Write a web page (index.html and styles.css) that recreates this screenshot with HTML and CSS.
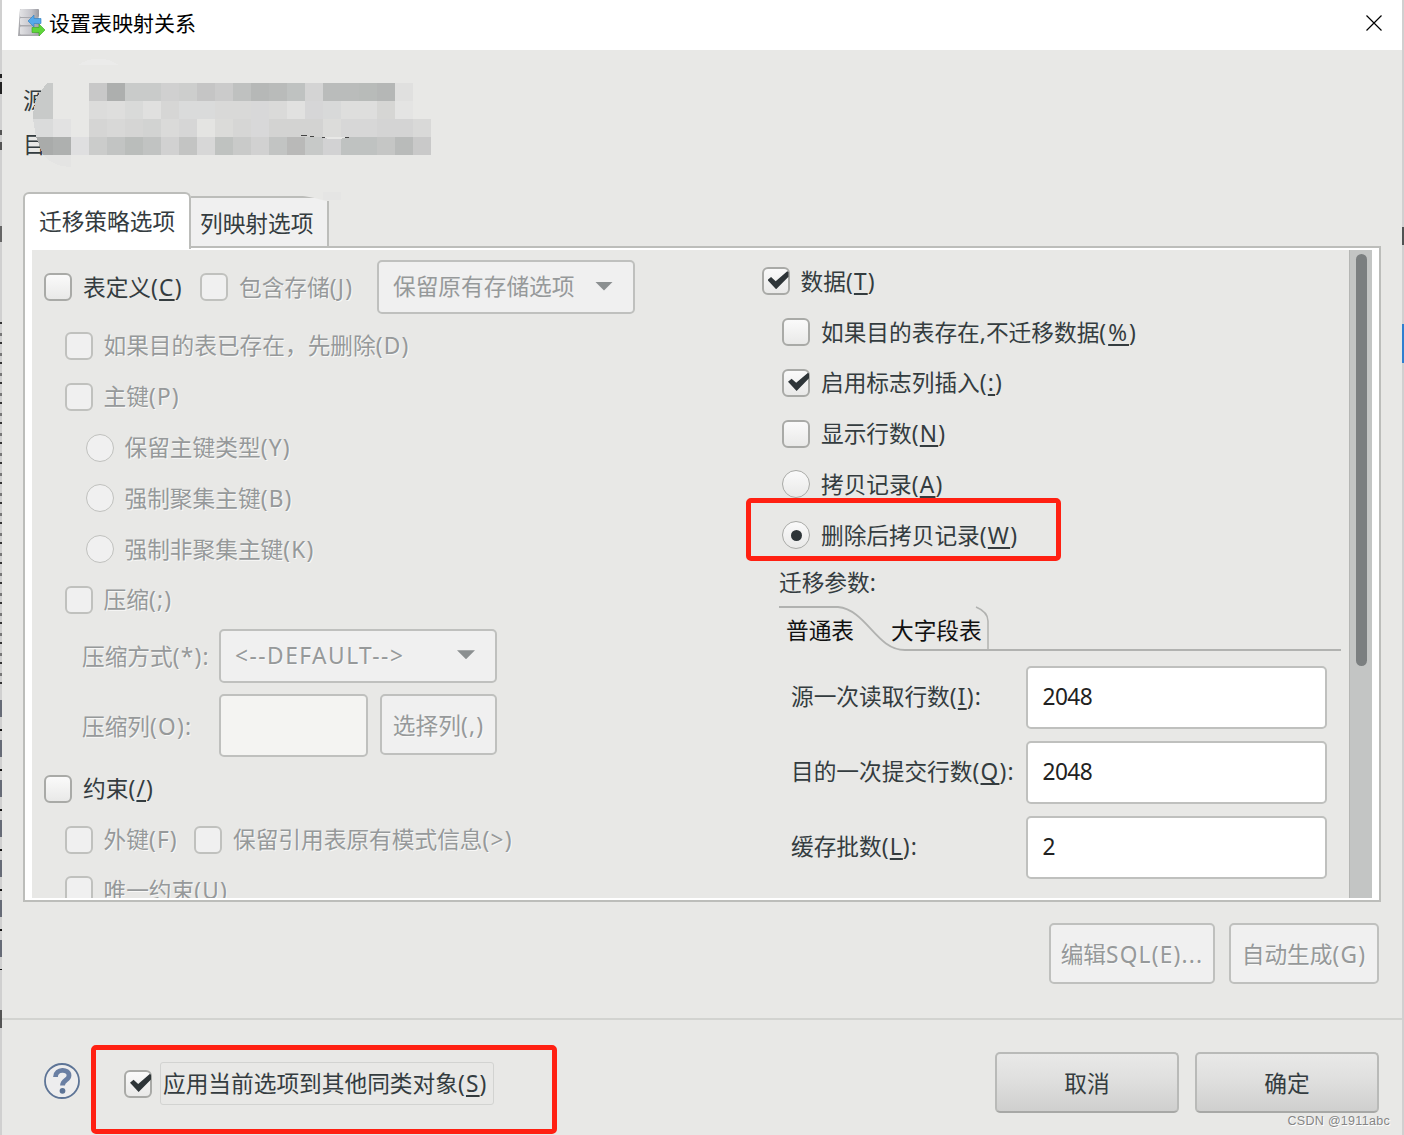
FILE: index.html
```html
<!DOCTYPE html>
<html lang="zh-CN">
<head>
    <meta charset="UTF-8">
    <meta name="viewport" content="width=device-width, initial-scale=1.0">
    <title>设置表映射关系</title>
    <link rel="stylesheet" href="styles.css">
</head>
<body>

    <div class="dialog">
        <div class="titlebar">
            <svg class="logo" width="28" height="30" viewBox="0 0 28 30">
                <defs>
                    <linearGradient id="metal" x1="0" x2="1"><stop offset="0" stop-color="#e2e2e4"/><stop offset="0.6" stop-color="#c4c4ca"/><stop offset="1" stop-color="#98989e"/></linearGradient>
                </defs>
                <path d="M3 1h18l2 27H1z" fill="#aaaaae"/>
                <rect x="3" y="1" width="19" height="8" rx="1" fill="url(#metal)"/>
                <rect x="3" y="10" width="19" height="7" rx="1" fill="url(#metal)"/>
                <rect x="3" y="18.500" width="19" height="8" rx="1" fill="url(#metal)"/>
                <path d="M11 13l6-6v3.500h7v5h-7v3.500z" fill="#55a9ea" stroke="#2d7cc0" stroke-width=".6"/>
                <path d="M28 22l-6-6v3.500h-7v5h7v3.500z" fill="#5fd63a" stroke="#37a41d" stroke-width=".6"/>
            </svg>
            <h1>设置表映射关系</h1>
            <svg class="close" width="16" height="16" viewBox="0 0 16 16"><path d="M.5 .5l15 15M15.500 .5l-15 15" stroke="#000" stroke-width="1.200"/></svg>
        </div>

        <div class="info">
            <p>源</p>
            <p>目</p>
            <svg class="mosaic" width="420" height="150" viewBox="15 55 420 150" shape-rendering="crispEdges">
                <path d="M78 65Q98 52 119 65z" fill="#ebebea"/>
                <path d="M53 83h-5Q33 96 33 119H53z" fill="#c8cac9"/>
                <path d="M33 119h20v18H36z" fill="#dadbdb"/>
                <path d="M36 137h17v18H43z" fill="#a9abaa"/>
                <path d="M43 155h28v12Q54 167 43 155z" fill="#e4e4e3"/>
                <g>
                    <rect x="89" y="83" width="18" height="18" fill="#c8c8c8"/><rect x="107" y="83" width="18" height="18" fill="#adafae"/><rect x="125" y="83" width="36" height="18" fill="#c9cbca"/><rect x="161" y="83" width="18" height="18" fill="#d0d0d0"/><rect x="179" y="83" width="18" height="18" fill="#cdcecd"/><rect x="197" y="83" width="18" height="18" fill="#c5c5c5"/><rect x="215" y="83" width="18" height="18" fill="#cbcbcb"/><rect x="233" y="83" width="18" height="18" fill="#bfc1c0"/><rect x="251" y="83" width="18" height="18" fill="#b6b8b7"/><rect x="269" y="83" width="18" height="18" fill="#b9bbba"/><rect x="287" y="83" width="18" height="18" fill="#bfc2c1"/><rect x="305" y="83" width="18" height="18" fill="#d4d4d4"/><rect x="323" y="83" width="36" height="18" fill="#babcbb"/><rect x="359" y="83" width="18" height="18" fill="#b8bbb9"/><rect x="377" y="83" width="18" height="18" fill="#b5b7b6"/><rect x="395" y="83" width="18" height="18" fill="#e0e0df"/>
                </g>
                <g>
                    <rect x="89" y="101" width="18" height="18" fill="#dcdcdb"/><rect x="107" y="101" width="18" height="18" fill="#dededd"/><rect x="125" y="101" width="18" height="18" fill="#d9dad9"/><rect x="143" y="101" width="18" height="18" fill="#e0e0df"/><rect x="161" y="101" width="18" height="18" fill="#d6d6d5"/><rect x="179" y="101" width="36" height="18" fill="#dadbdb"/><rect x="215" y="101" width="36" height="18" fill="#d9d9d8"/><rect x="251" y="101" width="18" height="18" fill="#d8d8d9"/><rect x="269" y="101" width="18" height="18" fill="#dadad9"/><rect x="287" y="101" width="18" height="18" fill="#e1e1e0"/><rect x="305" y="101" width="18" height="18" fill="#d6d6d7"/><rect x="323" y="101" width="18" height="18" fill="#d8d9d9"/><rect x="341" y="101" width="36" height="18" fill="#dededd"/><rect x="377" y="101" width="18" height="18" fill="#d6d6d4"/><rect x="395" y="101" width="18" height="18" fill="#e4e4e3"/>
                </g>
                <g>
                    <rect x="53" y="119" width="18" height="18" fill="#e2e2e2"/><rect x="89" y="119" width="18" height="18" fill="#d5d5d4"/><rect x="107" y="119" width="18" height="18" fill="#d8d8d7"/><rect x="125" y="119" width="18" height="18" fill="#d5d5d4"/><rect x="143" y="119" width="18" height="18" fill="#d2d3d2"/><rect x="161" y="119" width="18" height="18" fill="#dadad9"/><rect x="179" y="119" width="18" height="18" fill="#d6d6d6"/><rect x="197" y="119" width="18" height="18" fill="#e4e4e2"/><rect x="215" y="119" width="18" height="18" fill="#dbdbd9"/><rect x="233" y="119" width="18" height="18" fill="#d6d6d5"/><rect x="251" y="119" width="18" height="18" fill="#d8d8d9"/><rect x="269" y="119" width="54" height="18" fill="#d3d3d2"/><rect x="323" y="119" width="18" height="18" fill="#dcdcda"/><rect x="341" y="119" width="36" height="18" fill="#d7d7d7"/><rect x="377" y="119" width="36" height="18" fill="#d4d4d4"/><rect x="413" y="119" width="18" height="18" fill="#d9d9d8"/>
                </g>
                <g>
                    <rect x="53" y="137" width="18" height="18" fill="#aeb0af"/><rect x="71" y="137" width="18" height="18" fill="#dfdfe0"/><rect x="89" y="137" width="18" height="18" fill="#cbcccb"/><rect x="107" y="137" width="18" height="18" fill="#c2c4c3"/><rect x="125" y="137" width="18" height="18" fill="#babdbb"/><rect x="143" y="137" width="18" height="18" fill="#c1c3c2"/><rect x="161" y="137" width="18" height="18" fill="#d1d1d1"/><rect x="179" y="137" width="18" height="18" fill="#c3c4c3"/><rect x="197" y="137" width="18" height="18" fill="#d7d7d7"/><rect x="215" y="137" width="18" height="18" fill="#bfc2c0"/><rect x="233" y="137" width="18" height="18" fill="#c9cac9"/><rect x="251" y="137" width="18" height="18" fill="#d1d1d1"/><rect x="269" y="137" width="18" height="18" fill="#c2c4c3"/><rect x="287" y="137" width="18" height="18" fill="#b9b9b8"/><rect x="305" y="137" width="18" height="18" fill="#c7c9c8"/><rect x="323" y="137" width="18" height="18" fill="#d2d2d3"/><rect x="341" y="137" width="36" height="18" fill="#bfc2c1"/><rect x="377" y="137" width="18" height="18" fill="#c5c6c5"/><rect x="395" y="137" width="18" height="18" fill="#b9bbba"/><rect x="413" y="137" width="18" height="18" fill="#c9c9c9"/>
                </g>
                <path d="M323 137h23q-4 2.500-11 2.500t-12-2.500z" fill="#e8e8e6"/>
                <path d="M301 135.500h6M310 136.500h4M322 137.500h3M345 137.500h4" stroke="#444" stroke-width="1.200"/>
            </svg>
        </div>

        <div class="tabs">
            <div class="tab active">迁移策略选项</div>
            <div class="tab">列映射选项</div>
            <svg class="smudge" width="100" height="10" viewBox="0 0 100 10"><path d="M0 2Q30 3 48 9H62V0H0z" fill="#e8e8e6"/><path d="M45 0h18v8H45z" fill="#e5e5e4"/></svg>
        </div>

        <div class="panel">
            <div class="content">
                <div class="left">
                    <div class="row first">
                        <i class="check"></i><label class="w-def">表定义<span>(<u>C</u>)</span></label>
                        <i class="check off"></i><label class="w-store off">包含存储<span>(J)</span></label>
                        <div class="combo w258"><b>保留原有存储选项</b><i class="arrow"></i></div>
                    </div>
                    <div class="row in1 off"><i class="check"></i><label>如果目的表已存在，先删除<span>(D)</span></label></div>
                    <div class="row in1 off"><i class="check"></i><label>主键<span>(P)</span></label></div>
                    <div class="row in2 off"><i class="radio"></i><label>保留主键类型<span>(Y)</span></label></div>
                    <div class="row in2 off"><i class="radio"></i><label>强制聚集主键<span>(B)</span></label></div>
                    <div class="row in2 off"><i class="radio"></i><label>强制非聚集主键<span>(K)</span></label></div>
                    <div class="row in1 off"><i class="check"></i><label>压缩<span>(;)</span></label></div>
                    <div class="row method off">
                        <label class="w-name">压缩方式<span>(*):</span></label>
                        <div class="combo w278"><b class="latin">&lt;--DEFAULT--&gt;</b><i class="arrow"></i></div>
                    </div>
                    <div class="row columns off">
                        <label class="w-name">压缩列<span>(O):</span></label>
                        <div class="field empty"></div>
                        <div class="btn pick">选择列<span>(,)</span></div>
                    </div>
                    <div class="row limits"><i class="check"></i><label>约束<span>(<u>/</u>)</span></label></div>
                    <div class="row in1 off">
                        <i class="check"></i><label class="w-fk">外键<span>(F)</span></label>
                        <i class="check"></i><label>保留引用表原有模式信息<span>(&gt;)</span></label>
                    </div>
                    <div class="row in1 off"><i class="check"></i><label>唯一约束<span>(U)</span></label></div>
                </div>

                <div class="right">
                    <div class="row"><i class="check on"></i><label>数据<span>(<u>T</u>)</span></label></div>
                    <div class="row in1"><i class="check"></i><label>如果目的表存在,不迁移数据<span class="wide">(<u>%</u>)</span></label></div>
                    <div class="row in1"><i class="check on"></i><label>启用标志列插入<span>(<u>:</u>)</span></label></div>
                    <div class="row in1"><i class="check"></i><label>显示行数<span>(<u>N</u>)</span></label></div>
                    <div class="row in1"><i class="radio"></i><label>拷贝记录<span>(<u>A</u>)</span></label></div>
                    <div class="row in1"><i class="radio on"></i><label>删除后拷贝记录<span>(<u>W</u>)</span></label><div class="mark mark-copy"></div></div>
                    <div class="params">迁移参数:</div>
                    <div class="subtabs">
                        <svg width="562" height="46" viewBox="0 0 562 46">
                            <path d="M0 1H59C88 4 97 44 126 44H562" fill="none" stroke="#b1b2b0" stroke-width="1.800"/>
                            <path d="M197 1Q209 6 209 15V44" fill="none" stroke="#b1b2b0" stroke-width="1.500"/>
                        </svg>
                        <span class="sub1">普通表</span><span class="sub2">大字段表</span>
                    </div>
                    <div class="form">
                        <label>源一次读取行数<span>(<u>I</u>):</span></label><div class="field">2048</div>
                        <label>目的一次提交行数<span>(<u>Q</u>):</span></label><div class="field">2048</div>
                        <label>缓存批数<span>(<u>L</u>):</span></label><div class="field">2</div>
                    </div>
                </div>
            </div>
            <div class="scroll"><div class="thumb"></div></div>
        </div>

        <div class="actions off">
            <div class="btn edit">编辑<span>SQL(E)...</span></div>
            <div class="btn auto">自动生成<span>(G)</span></div>
        </div>

        <div class="footer">
            <svg class="help" width="38" height="38" viewBox="0 0 38 38">
                <circle cx="19" cy="19" r="17" fill="#ededee" stroke="#5d7496" stroke-width="1.800"/>
                <path d="M12.500 15C12.500 6.500 26 6.500 26 13.500C26 18.500 19.500 17.500 19.500 23.500" fill="none" stroke="#6a7fa3" stroke-width="4.800"/>
                <circle cx="19.500" cy="28.800" r="2.900" fill="#5d7496"/>
            </svg>
            <i class="check on"></i>
            <label class="focus">应用当前选项到其他同类对象<span>(<u>S</u>)</span></label>
            <div class="mark mark-apply"></div>
            <div class="btn main">取消</div>
            <div class="btn main">确定</div>
            <div class="watermark">CSDN @1911abc</div>
        </div>
    </div>

</body>
</html>
```
FILE: styles.css
```css
* {
    margin: 0;
    padding: 0;
    box-sizing: border-box;
}

/* thin slices of the window behind show on both sides of the dialog */
body {
    width: 1404px;
    height: 1135px;
    overflow: hidden;
    background:
        linear-gradient(#2f7fd0, #2f7fd0) 1402px 324px / 2px 39px no-repeat,
        linear-gradient(#505353, #505353) 1402px 227px / 2px 18px no-repeat,
        linear-gradient(#222, #222) 0 74px / 2px 4px no-repeat,
        linear-gradient(#222, #222) 0 82px / 2px 12px no-repeat,
        linear-gradient(#555, #555) 0 130px / 2px 5px no-repeat,
        linear-gradient(#555, #555) 0 142px / 2px 8px no-repeat,
        linear-gradient(#666, #666) 0 226px / 2px 16px no-repeat,
        repeating-linear-gradient(#333 0 2px, #d0d0d0 2px 11px, #777 11px 14px, #d0d0d0 14px 20px) 0 322px / 2px 370px no-repeat,
        repeating-linear-gradient(#666b77 0 17px, #d0d0d0 17px 29px, #111 29px 31px, #d0d0d0 31px 40px) 0 700px / 2px 270px no-repeat,
        linear-gradient(#555, #555) 0 1010px / 2px 18px no-repeat,
        #d0d0d0;
    padding: 0 2px;
    font-family: "Noto Sans", "Noto Sans CJK SC", sans-serif;
    font-size: 22.7px;
    line-height: 30px;
    color: #343c3f;
    white-space: nowrap;
}

.dialog {
    height: 1135px;
    background: #e8e8e6;
    display: flex;
    flex-direction: column;
}

.titlebar {
    height: 50px;
    background: #fff;
    display: flex;
    align-items: center;
    padding: 0 20px 4px 15px;
}

.titlebar h1 {
    font: 21px/30px "Noto Sans CJK SC", sans-serif;
    color: #000;
    margin-left: 4px;
    padding-bottom: 3px;
    flex: 1;
}

/* source / target names, hidden by the mosaic */
.info {
    height: 142px;
    padding: 36px 0 0 21px;
    position: relative;
}

.info p {
    height: 44px;
}

.mosaic {
    position: absolute;
    left: 13px;
    top: 5px;
}

.tabs {
    height: 54px;
    padding-left: 21px;
    display: flex;
    align-items: flex-end;
    position: relative;
}

.tab {
    height: 50px;
    width: 138px;
    padding: 11px 0 0 9px;
    border: 2px solid #bcbdba;
    border-left: none;
    border-bottom: none;
    background: #f0f0f0;
}

.tab.active {
    width: 168px;
    height: 57px;
    margin-bottom: -3px;
    padding: 13px 0 0 14px;
    border-left: 2px solid #bcbdba;
    border-radius: 6px 6px 0 0;
    background: #fff;
    position: relative;
    z-index: 1;
}

.smudge {
    position: absolute;
    left: 276px;
    top: 0;
}

.panel {
    height: 656px;
    width: 1358px;
    margin-left: 21px;
    border: 2px solid #bcbdba;
    background: #fff;
    padding: 2px 7px 2px 7px;
    display: flex;
}

.content {
    flex: 1;
    height: 648px;
    overflow: hidden;
    background: #e8e8e6;
    display: flex;
}

.left {
    width: 729.5px;
    padding: 11px 0 0 12px;
    flex-shrink: 0;
}

.right {
    padding-top: 5.9px;
    flex: 1;
}

.row {
    height: 50.8px;
    display: flex;
    align-items: center;
    position: relative;
}

.row.first {
    height: 54px;
    margin: -1px 0 6.6px;
}

.in1 {
    padding-left: 20.5px;
}

.in2 {
    padding-left: 41.5px;
}

.off,
.off label {
    color: #96999a;
    text-shadow: 1px 1px 0 #f8f8f7;
}

.row label {
    padding-top: 1px;
}

label span,
.btn span {
    letter-spacing: 1.2px;
}

label .wide {
    letter-spacing: 2px;
}

u {
    text-underline-offset: 3px;
    text-decoration-thickness: 1.5px;
    text-decoration-skip-ink: none;
}

.check,
.radio {
    width: 28px;
    height: 28px;
    border: 2px solid #a9aaa7;
    border-radius: 6px;
    background: linear-gradient(#fafafa, #e9e9e8);
    margin-right: 11px;
    flex-shrink: 0;
    position: relative;
}

.radio {
    border-radius: 50%;
    border-width: 1.5px;
}

.off .check,
.off .radio,
.check.off {
    background: #f0f0f0;
    border-color: #c0c1be;
}

.check.on::after {
    content: "";
    position: absolute;
    left: 4px;
    top: 2px;
    width: 21px;
    height: 18px;
    background: #2e3538;
    clip-path: polygon(0 49%, 17% 32%, 39% 55%, 94% 0, 100% 4%, 100% 30%, 41% 100%);
}

.radio.on::after {
    content: "";
    position: absolute;
    left: 7.5px;
    top: 7.5px;
    width: 11px;
    height: 11px;
    border-radius: 50%;
    background: #2e3538;
}

.w-def {
    width: 117px;
}

.w-store {
    width: 138px;
}

.w-name {
    width: 137px;
}

.w-fk {
    width: 90.5px;
}

.combo,
.btn,
.field {
    border: 2px solid #bfc0be;
    border-radius: 5px;
    background: #f0f0f0;
}

.combo {
    height: 54px;
    display: flex;
    align-items: center;
    justify-content: space-between;
    padding: 0 20px 0 14px;
    color: #96999a;
}

.combo b {
    font-weight: normal;
}

.combo .latin {
    letter-spacing: 1.5px;
}

.w258 {
    width: 258px;
}

.w278 {
    width: 278px;
}

.arrow {
    width: 18px;
    height: 9px;
    margin-top: -2px;
    background: #8b8f90;
    clip-path: polygon(0 0, 100% 0, 50% 100%);
}

.method {
    height: 54px;
    margin-top: 3.4px;
    padding-left: 38px;
}

.method label,
.columns label {
    padding-top: 3px;
}

.columns {
    height: 63px;
    margin: 11px 0 6.6px;
    padding-left: 38px;
}

.field {
    height: 63px;
    background: #fff;
    color: #222;
    padding: 14px 0 0 15px;
    letter-spacing: -0.6px;
}

.field.empty {
    width: 149px;
    background: #f4f4f2;
    margin-right: 12px;
}

.btn {
    height: 61px;
    padding-top: 3px;
    display: flex;
    align-items: center;
    justify-content: center;
}

.pick {
    width: 117px;
    align-self: flex-start;
}

/* red frames around the options to notice */
.mark {
    position: absolute;
    border: 5px solid #ff2012;
    border-radius: 5px;
}

.mark-copy {
    left: -15.5px;
    top: -11.8px;
    width: 315px;
    height: 63px;
}

.mark-apply {
    left: 89px;
    top: 25px;
    width: 466px;
    height: 89px;
}

.params {
    height: 45.6px;
    padding: 7px 0 0 17.5px;
}

.subtabs {
    height: 46px;
    margin-left: 17.5px;
    display: grid;
    color: #111;
}

.subtabs > * {
    grid-area: 1 / 1;
}

.sub1 {
    padding: 10px 0 0 7px;
}

.sub2 {
    padding: 10px 0 0 112px;
}

.form {
    margin: 13.6px 0 0 29.5px;
    display: grid;
    grid-template-columns: 234.5px 301px;
    row-gap: 12px;
    align-items: center;
}

.scroll {
    width: 23px;
    margin-left: -1px;
    background: #c3c5c4;
    border-left: 1px solid #b5b6b4;
    padding: 4px 0 0 6px;
}

.thumb {
    width: 11px;
    height: 412px;
    border-radius: 6px;
    background: #7b7f80;
}

.actions {
    height: 116px;
    padding: 21px 23px 0 0;
    display: flex;
    justify-content: flex-end;
    gap: 14px;
}

.edit {
    width: 166px;
}

.auto {
    width: 150px;
}

.footer {
    flex: 1;
    border-top: 2px solid #d2d3d0;
    padding: 0 23px 0 41px;
    display: flex;
    align-items: center;
    position: relative;
}

.help {
    margin: 7px 43px 0 0;
}

.footer .check {
    margin: 13px 8px 0 0;
}

.focus {
    width: 334px;
    height: 43px;
    margin: 12px auto 0 0;
    padding: 6px 0 0 2px;
    border: 1.5px solid #d2d3d1;
    border-radius: 3px;
}

.main {
    width: 184px;
    margin: 10px 0 0 16px;
    border-color: #b9bab8;
    border-bottom-color: #a7a8a6;
    background: linear-gradient(#e9e9e8, #dededd 50%, #cfcfce);
}

.watermark {
    position: absolute;
    right: 12px;
    bottom: 5px;
    font: 12.5px/18px "Liberation Sans", sans-serif;
    letter-spacing: 0.3px;
    color: #858585;
    text-shadow: 1px 1px 0 #fff;
}
```
